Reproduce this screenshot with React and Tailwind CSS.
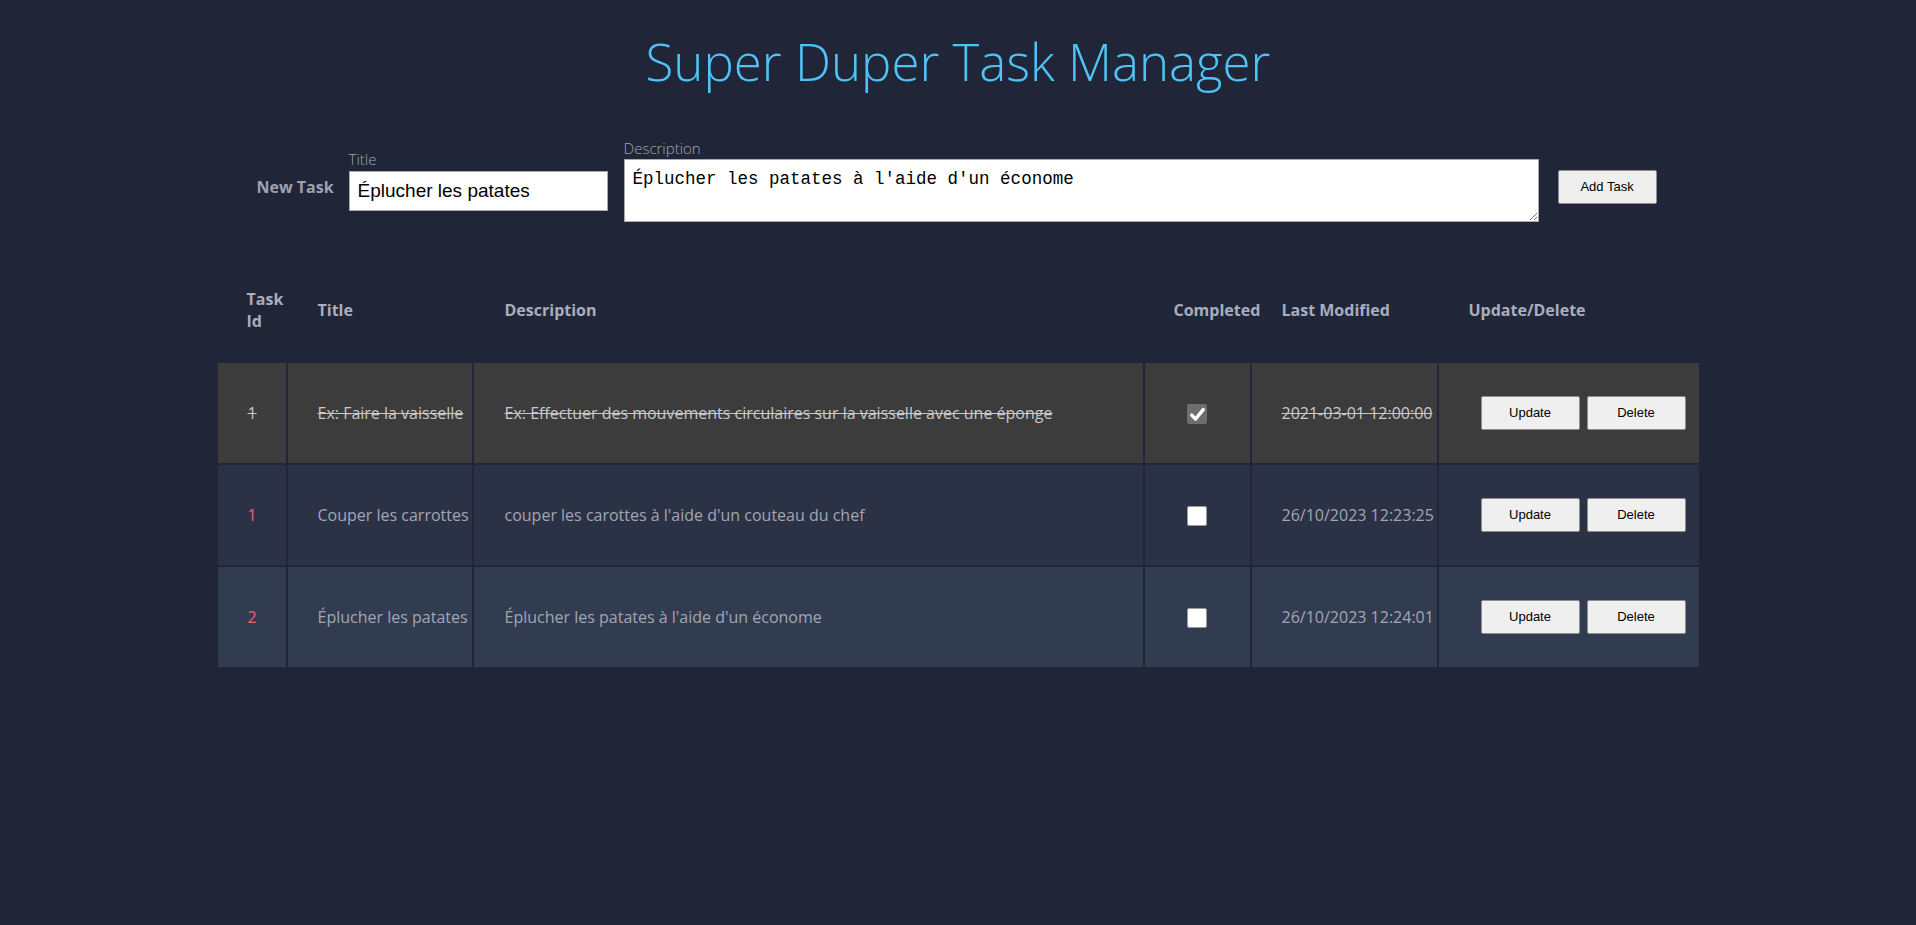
import React from "react";

const tasks = [
  {
    id: 1,
    title: "Ex: Faire la vaisselle",
    description:
      "Ex: Effectuer des mouvements circulaires sur la vaisselle avec une éponge",
    completed: true,
    modified: "2021-03-01 12:00:00",
    bg: "bg-[#3c3c3c]",
  },
  {
    id: 1,
    title: "Couper les carrottes",
    description: "couper les carottes à l'aide d'un couteau du chef",
    completed: false,
    modified: "26/10/2023 12:23:25",
    bg: "bg-[#2c3246]",
  },
  {
    id: 2,
    title: "Éplucher les patates",
    description: "Éplucher les patates à l'aide d'un économe",
    completed: false,
    modified: "26/10/2023 12:24:01",
    bg: "bg-[#323c51]",
  },
];

function Bouton({ children }) {
  return (
    <button className="w-[99px] h-[34px] bg-[#efefef] border border-[#8f8f8f] rounded-[2px] text-[13px] text-black font-['Liberation_Sans',Arial,sans-serif]">
      {children}
    </button>
  );
}

function Case({ checked }) {
  // case à cocher dessinée, le rendu natif varie trop
  if (checked) {
    return (
      <span className="inline-flex w-[20px] h-[20px] items-center justify-center rounded-[2px] bg-[#6e6e6e] align-middle">
        <svg width="17" height="17" viewBox="0 0 16 16">
          <path
            d="M2.6 8.6 L6.2 12.2 L13.4 3.4"
            fill="none"
            stroke="white"
            strokeWidth="3.2"
            strokeLinecap="round"
            strokeLinejoin="round"
          />
        </svg>
      </span>
    );
  }
  return (
    <span className="inline-block w-[20px] h-[20px] rounded-[2px] bg-white border border-[#9a9a9a] align-middle"></span>
  );
}

export default function App() {
  return (
    <div className="min-h-[925px] bg-[#202638] font-['Open_Sans',sans-serif] overflow-hidden">
      <h1 className="mt-[27px] text-center text-[51px] leading-[68px] font-light text-[#4fc3f7]">
        Super Duper Task Manager
      </h1>

      <div className="mt-[42px] pr-[3px] flex justify-center items-start gap-[16px]">
        <p className="mt-[39px] mr-[-1px] text-[16px] leading-[22px] font-bold text-[#9ea2b3]">
          New Task
        </p>
        <div className="mt-[11px] flex flex-col">
          <label className="text-[15px] leading-[22px] font-light text-[#a0a4b2]">
            Title
          </label>
          <input
            type="text"
            defaultValue="Éplucher les patates"
            className="mt-[1px] w-[259px] h-[40px] bg-white border border-[#aaaaaa] pl-[8px] text-[19px] text-black font-['Liberation_Sans',Arial,sans-serif] outline-none"
          />
        </div>
        <div className="flex flex-col">
          <label className="text-[15px] leading-[22px] font-light text-[#a0a4b2]">
            Description
          </label>
          <textarea
            defaultValue="Éplucher les patates à l'aide d'un économe"
            className="w-[915px] h-[63px] bg-white border border-[#aaaaaa] px-[8px] py-[9px] text-[17.5px] leading-[20px] text-black font-['Liberation_Mono',monospace] outline-none"
          />
        </div>
        <div className="mt-[33px] ml-[3px]">
          <Bouton>Add Task</Bouton>
        </div>
      </div>

      <table className="mx-auto mt-[35px] w-[1485px] table-fixed border-separate border-spacing-[2px]">
        <colgroup>
          <col className="w-[68px]" />
          <col className="w-[184px]" />
          <col className="w-[669px]" />
          <col className="w-[105px]" />
          <col className="w-[185px]" />
          <col className="w-[260px]" />
        </colgroup>
        <thead>
          <tr className="h-[102px] text-left text-[16px] leading-[22px] font-bold text-[#a9adc0]">
            <th className="pl-[29px] pr-0 align-middle whitespace-normal">Task Id</th>
            <th className="pl-[30px] align-middle">Title</th>
            <th className="pl-[31px] align-middle">Description</th>
            <th className="pl-[29px] align-middle whitespace-nowrap">Completed</th>
            <th className="pl-[30px] align-middle whitespace-nowrap">Last Modified</th>
            <th className="pl-[30px] align-middle">Update/Delete</th>
          </tr>
        </thead>
        <tbody>
          {tasks.map((t, i) => {
            const texte = t.completed
              ? "text-[#c8c8c8] line-through"
              : "text-[#a2a6b3]";
            return (
              <tr key={i} className={`h-[100px] text-[16px] leading-[22px] ${t.bg}`}>
                <td
                  className={`pl-[30px] align-middle ${
                    t.completed ? "text-[#c8c8c8] line-through" : "text-[#e8626f]"
                  }`}
                >
                  {t.id}
                </td>
                <td className={`pl-[30px] align-middle whitespace-nowrap ${texte}`}>
                  {t.title}
                </td>
                <td className={`pl-[31px] align-middle whitespace-nowrap ${texte}`}>
                  {t.description}
                </td>
                <td className="align-middle text-center">
                  <Case checked={t.completed} />
                </td>
                <td className={`pl-[30px] align-middle whitespace-nowrap ${texte}`}>
                  {t.modified}
                </td>
                <td className="pl-[42px] align-middle">
                  <div className="flex gap-[7px]">
                    <Bouton>Update</Bouton>
                    <Bouton>Delete</Bouton>
                  </div>
                </td>
              </tr>
            );
          })}
        </tbody>
      </table>
    </div>
  );
}
